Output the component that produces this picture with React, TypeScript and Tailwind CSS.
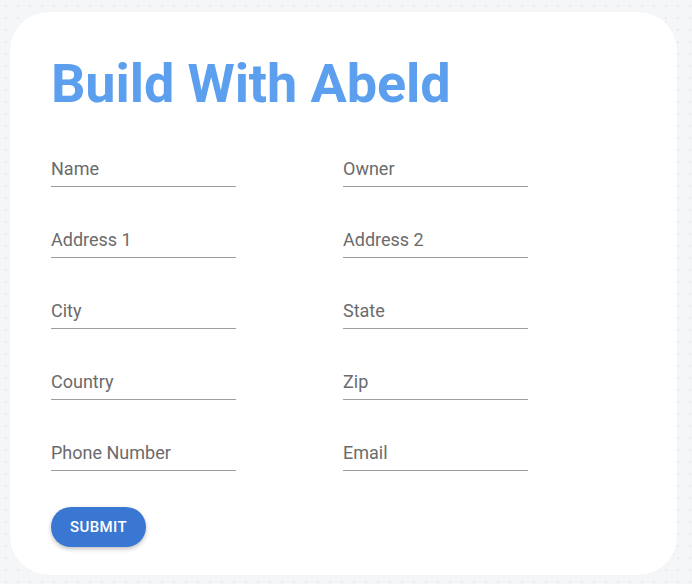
import React from "react";

const fields = [
  "Name",
  "Owner",
  "Address 1",
  "Address 2",
  "City",
  "State",
  "Country",
  "Zip",
  "Phone Number",
  "Email",
];

export default function App() {
  return (
    <div
      className="h-[584px] w-[692px] bg-[#f5f6f8] bg-[radial-gradient(#e9eaee_1px,transparent_1px)] bg-[length:12px_12px] pt-[12px] pl-[10px] font-['Roboto',sans-serif]"
    >
      <div className="h-[563px] w-[667px] rounded-[38px] bg-white pl-[41px] pt-[45px] shadow-[0_0_2px_rgba(0,0,0,0.04)]">
        <h1 className="text-[54px] font-bold leading-none tracking-[-0.1px] text-[#5b9fee]">
          Build With Abeld
        </h1>
        <form className="mt-[35px] grid grid-cols-[185px_185px] gap-x-[107px] gap-y-[30px]">
          {fields.map((label) => (
            <label key={label} className="flex h-[41px] flex-col justify-end border-b border-[#9e9e9e] pb-[7px]">
              <span className="text-[18px] leading-5 text-[#6b6b6b]">{label}</span>
            </label>
          ))}
        </form>
        <button className="mt-[36px] h-[40px] w-[95px] rounded-full bg-[#3a77d2] text-[15px] font-medium tracking-[0.4px] text-white shadow-[0_2px_4px_rgba(0,0,0,0.25)]">
          SUBMIT
        </button>
      </div>
    </div>
  );
}
